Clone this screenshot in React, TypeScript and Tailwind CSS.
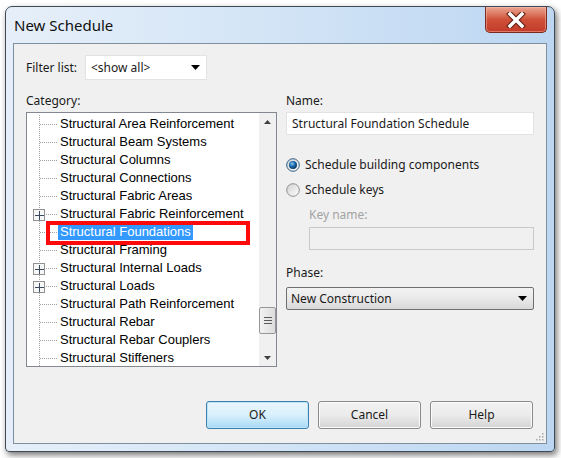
import React from 'react'

const ui = "font-['Noto_Sans',sans-serif]"
const tree = "font-['Liberation_Sans',Arial,sans-serif]"

type Item = { label: string; plus?: boolean; selected?: boolean }

const items: Item[] = [
  { label: 'Structural Area Reinforcement' },
  { label: 'Structural Beam Systems' },
  { label: 'Structural Columns' },
  { label: 'Structural Connections' },
  { label: 'Structural Fabric Areas' },
  { label: 'Structural Fabric Reinforcement', plus: true },
  { label: 'Structural Foundations', selected: true },
  { label: 'Structural Framing' },
  { label: 'Structural Internal Loads', plus: true },
  { label: 'Structural Loads', plus: true },
  { label: 'Structural Path Reinforcement' },
  { label: 'Structural Rebar' },
  { label: 'Structural Rebar Couplers' },
  { label: 'Structural Stiffeners' },
]

function Connector({ plus }: { plus?: boolean }) {
  return (
    <svg width="33" height="18" className="shrink-0" shapeRendering="crispEdges">
      <line x1="12.5" y1="0" x2="12.5" y2="18" stroke="#a0a0a0" strokeDasharray="1 1" />
      <line x1="13" y1="9.5" x2="31" y2="9.5" stroke="#a0a0a0" strokeDasharray="1 1" />
      {plus && (
        <g>
          <rect x="6.5" y="4.5" width="11" height="11" fill="#f7f7f7" stroke="#919191" />
          <line x1="8" y1="10.5" x2="17" y2="10.5" stroke="#3b4a5a" />
          <line x1="12.5" y1="6" x2="12.5" y2="15" stroke="#3b4a5a" />
        </g>
      )}
    </svg>
  )
}

function Triangle({ down = true, w = 9, h = 5, color = '#000' }: { down?: boolean; w?: number; h?: number; color?: string }) {
  return (
    <svg width={w} height={h}>
      <polygon points={down ? `0,0 ${w},0 ${w / 2},${h}` : `0,${h} ${w},${h} ${w / 2},0`} fill={color} />
    </svg>
  )
}

function Radio({ checked }: { checked?: boolean }) {
  return (
    <svg width="14" height="14" className="shrink-0">
      <defs>
        <linearGradient id={checked ? 'rg1' : 'rg0'} x1="0" y1="0" x2="1" y2="1">
          <stop offset="0" stopColor="#d0d0d0" />
          <stop offset="1" stopColor="#ffffff" />
        </linearGradient>
        <radialGradient id="dot" cx="0.4" cy="0.35" r="0.7">
          <stop offset="0" stopColor="#8ccbf3" />
          <stop offset="0.45" stopColor="#1f6db0" />
          <stop offset="1" stopColor="#082f57" />
        </radialGradient>
      </defs>
      <circle cx="7" cy="7" r="6.3" fill={`url(#${checked ? 'rg1' : 'rg0'})`} stroke={checked ? '#2f5f86' : '#8e8f8f'} />
      {checked && <circle cx="7" cy="7" r="4" fill="url(#dot)" />}
    </svg>
  )
}

function Button({ label, primary }: { label: string; primary?: boolean }) {
  return (
    <div
      className={`w-[103px] h-[28px] rounded-[3px] border flex items-center justify-center text-[12px] text-[#1a1a1a] ${
        primary
          ? 'border-[#3c7fb1] bg-gradient-to-b from-[#eaf6fd] via-[#d9f0fc] to-[#a7d9f5] shadow-[inset_0_0_0_1px_#bfe4f8]'
          : 'border-[#8a8a8a] bg-gradient-to-b from-[#f2f2f2] via-[#ebebeb] to-[#d4d4d4] shadow-[inset_0_0_0_1px_#fbfbfb]'
      }`}
    >
      {label}
    </div>
  )
}

export default function App() {
  return (
    <div className={`w-[561px] h-[458px] bg-white pt-[6px] pl-[5px] ${ui}`}>
      <div className="w-[550px] h-[446px] rounded-t-[7px] rounded-b-[4px] border border-[#3f4a57] bg-gradient-to-r from-[#e6eff9] via-[#d2e4f6] to-[#bcd6f1] shadow-[2px_3px_6px_rgba(0,0,0,0.55)] flex flex-col px-[7px] pb-[7px]">
        <div className="h-[36px] flex items-start justify-between">
          <span className="mt-[7px] ml-[1px] text-[15px] text-[#101010]">New Schedule</span>
          <div className="w-[62px] h-[26px] rounded-b-[5px] border border-t-0 border-[#7a2a1e] bg-gradient-to-b from-[#e9a592] via-[#cf5038] to-[#c23b29] shadow-[inset_0_0_0_1px_rgba(255,200,180,0.45)] flex items-center justify-center">
            <svg width="20" height="16" viewBox="0 0 20 16">
              <path d="M4 2 L16 14 M16 2 L4 14" stroke="#5a1a10" strokeWidth="5.5" strokeLinecap="square" />
              <path d="M4 2 L16 14 M16 2 L4 14" stroke="#ffffff" strokeWidth="3.5" strokeLinecap="square" />
            </svg>
          </div>
        </div>

        <div className="relative flex-1 border border-[#7e8fa0] bg-[#f0f0f0] pt-[11px] px-[12px] text-[12px] text-[#1a1a1a]">
          <div className="flex items-center h-[25px]">
            <span className="w-[59px]">Filter list:</span>
            <div className="w-[122px] h-[25px] bg-white border border-[#e3e3e3] flex items-center justify-between pl-[5px] pr-[6px]">
              <span>&lt;show all&gt;</span>
              <Triangle />
            </div>
          </div>

          <div className="flex gap-[9px] mt-[13px]">
            <div className="w-[251px]">
              <div className="h-[16px] leading-[16px]">Category:</div>
              <div className="relative mt-[3px] h-[255px] bg-white border border-[#828790] flex overflow-hidden">
                <div className={`flex-1 pt-[2px] ${tree} text-[13px] text-black`}>
                  {items.map((it) => (
                    <div key={it.label} className="flex h-[18px] items-center">
                      <Connector plus={it.plus} />
                      <span
                        className={`-ml-[2px] px-[2px] leading-[16px] whitespace-nowrap ${
                          it.selected ? 'bg-[#3399ff] text-white' : ''
                        }`}
                      >
                        {it.label}
                      </span>
                    </div>
                  ))}
                </div>
                <div className="w-[17px] bg-[#f0f0f0] flex flex-col items-center">
                  <div className="h-[17px] flex items-center justify-center">
                    <Triangle down={false} w={7} h={4} color="#404040" />
                  </div>
                  <div className="flex-1 w-full relative">
                    <div className="absolute left-0 right-0 top-[177px] h-[27px] rounded-[2px] border border-[#979797] bg-gradient-to-r from-[#f2f2f2] to-[#dcdcdc] flex flex-col items-center justify-center gap-[2px]">
                      <div className="w-[8px] h-[1px] bg-[#5a5a5a]" />
                      <div className="w-[8px] h-[1px] bg-[#5a5a5a]" />
                      <div className="w-[8px] h-[1px] bg-[#5a5a5a]" />
                    </div>
                  </div>
                  <div className="h-[17px] flex items-center justify-center">
                    <Triangle w={7} h={4} color="#404040" />
                  </div>
                </div>
                <div className="absolute left-[19px] top-[108px] w-[204px] h-[24px] border-[4px] border-[#ff0a0a]" />
              </div>
            </div>

            <div className="w-[248px] flex flex-col">
              <div className="h-[16px] leading-[16px]">Name:</div>
              <div className="mt-[3px] h-[23px] bg-white border border-[#e2e2e2] flex items-center pl-[5px]">
                Structural Foundation Schedule
              </div>
              <div className="mt-[22px] h-[16px] flex items-center gap-[5px]">
                <Radio checked />
                <span>Schedule building components</span>
              </div>
              <div className="mt-[9px] h-[16px] flex items-center gap-[5px]">
                <Radio />
                <span>Schedule keys</span>
              </div>
              <div className="ml-[23px] mt-[9px] h-[16px] leading-[16px] text-[#a3a3a3]">Key name:</div>
              <div className="ml-[23px] mt-[4px] h-[23px] border border-[#c9c9c9] bg-[#f0f0f0]" />
              <div className="mt-[15px] h-[16px] leading-[16px]">Phase:</div>
              <div className="mt-[6px] h-[23px] rounded-[2px] border border-[#707070] bg-gradient-to-b from-[#f3f3f3] via-[#e9e9e9] to-[#d9d9d9] flex items-center justify-between pl-[4px] pr-[6px]">
                <span>New Construction</span>
                <Triangle />
              </div>
            </div>
          </div>

          <div className="flex justify-end gap-[9px] mt-[34px] pr-[1px]">
            <Button label="OK" primary />
            <Button label="Cancel" />
            <Button label="Help" />
          </div>

          <svg width="10" height="10" className="absolute right-[2px] bottom-[2px]">
            {[
              [8, 2],
              [8, 5],
              [5, 5],
              [8, 8],
              [5, 8],
              [2, 8],
            ].map(([x, y]) => (
              <rect key={`${x}-${y}`} x={x} y={y} width="1.5" height="1.5" fill="#a8a8a8" />
            ))}
          </svg>
        </div>
      </div>
    </div>
  )
}
